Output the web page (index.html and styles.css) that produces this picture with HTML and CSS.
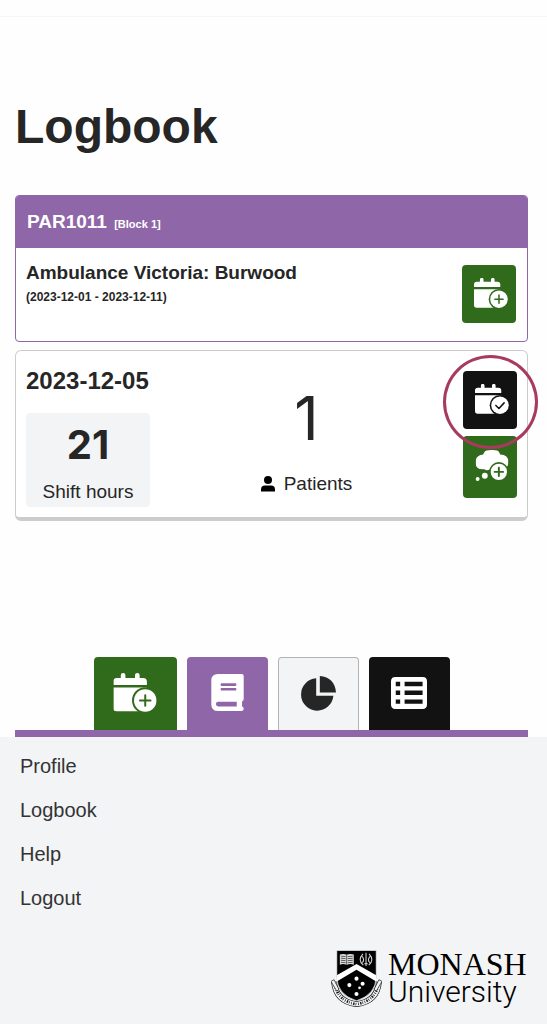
FILE: index.html
```
<!DOCTYPE html>
<html lang="en">
<head>
    <meta charset="UTF-8">
    <meta name="viewport" content="width=device-width, initial-scale=1.0">
    <title>Logbook</title>
    <link rel="stylesheet" href="styles.css">
</head>
<body>
    <!-- Shared icons -->
    <svg class="icon-defs" aria-hidden="true">
        <mask id="badgeCut" maskUnits="userSpaceOnUse" x="0" y="0" width="132" height="118">
            <rect width="132" height="118" fill="#fff"/>
            <circle cx="97" cy="83" r="40" fill="#000"/>
        </mask>
        <symbol id="calendar" viewBox="0 0 132 118">
            <g mask="url(#badgeCut)">
                <path d="M0 36V26q0-11 11-11h12V7q0-7 7-7t7 7v8h29V7q0-7 7-7t7 7v8h11q11 0 11 11v10z"/>
                <path d="M0 44h102v72H10q-10 0-10-10z"/>
            </g>
            <circle cx="97" cy="83" r="34"/>
        </symbol>
        <symbol id="calendar-plus" viewBox="0 0 132 118">
            <use href="#calendar" width="132" height="118"/>
            <path class="icon-mark" d="M97 67v32M81 83h32"/>
        </symbol>
        <symbol id="calendar-check" viewBox="0 0 132 118">
            <use href="#calendar" width="132" height="118"/>
            <path class="icon-mark" d="M81 84l12 12 20-22"/>
        </symbol>
    </svg>

    <div class="topbar"></div>

    <main class="page">
        <h1>Logbook</h1>

        <section class="block-card">
            <h2 class="block-header">PAR1011 <small>[Block 1]</small></h2>
            <div class="block-body">
                <div>
                    <h3>Ambulance Victoria: Burwood</h3>
                    <p class="block-dates">(2023-12-01 - 2023-12-11)</p>
                </div>
                <button type="button" class="btn btn-green" aria-label="Add shift">
                    <svg class="icon"><use href="#calendar-plus"/></svg>
                </button>
            </div>
        </section>

        <section class="shift-card">
            <div class="shift-info">
                <h3>2023-12-05</h3>
                <div class="hours">
                    <strong>21</strong>
                    <span>Shift hours</span>
                </div>
            </div>
            <div class="patients">
                <span class="patient-count">1</span>
                <span class="patient-label">
                    <svg class="icon-user" viewBox="0 0 14 16"><circle cx="7" cy="4" r="4"/><path d="M0 15.500v-2q0-4 4-4h6q4 0 4 4v2z"/></svg>
                    Patients
                </span>
            </div>
            <div class="actions">
                <div class="highlighted">
                    <button type="button" class="btn btn-black" aria-label="Complete shift">
                        <svg class="icon"><use href="#calendar-check"/></svg>
                    </button>
                </div>
                <button type="button" class="btn btn-tall btn-green" aria-label="Add reflection">
                    <svg class="icon" viewBox="0 0 102 98">
                        <mask id="cloudCut" maskUnits="userSpaceOnUse" x="0" y="0" width="102" height="98">
                            <rect width="102" height="98" fill="#fff"/>
                            <circle cx="72" cy="67" r="30" fill="#000"/>
                        </mask>
                        <g mask="url(#cloudCut)">
                            <path d="M24 14Q28 0 42 1Q50-2 60 1Q72 0 76 14Q101 15 102 37Q102 51 88 58L44 60Q34 64 28 59Q2 62 0 38Q0 17 24 14z"/>
                        </g>
                        <circle cx="29" cy="79" r="9"/>
                        <circle cx="7" cy="89" r="6"/>
                        <circle cx="72" cy="67" r="25"/>
                        <path class="icon-mark" d="M72 54v26M59 67h26"/>
                    </svg>
                </button>
            </div>
        </section>

        <nav class="tabs" aria-label="Sections">
            <a href="#" class="tab tab-green" aria-label="Add shift">
                <svg class="icon-large"><use href="#calendar-plus"/></svg>
            </a>
            <a href="#" class="tab tab-purple" aria-label="Logbook">
                <svg class="icon-book" viewBox="0 0 98 112">
                    <path fill-rule="evenodd" d="M20 0H92q6 0 6 6V76q0 5-5 7v15q5 1 5 6 0 8-7 8H20Q0 112 0 92V20Q0 0 20 0zM21 84q-7 0-7 7t7 7H77V84zM31 28q-3 0-3 4t3 4H73q3 0 3-4t-3-4zM31 42q-3 0-3 4t3 4H73q3 0 3-4t-3-4z"/>
                </svg>
            </a>
            <a href="#" class="tab tab-light" aria-label="Statistics">
                <svg class="icon-pie" viewBox="0 0 106 106">
                    <path d="M46 7V60H98A49 49 0 1 1 46 7z"/>
                    <path d="M57 0Q102 4 106 50H57z"/>
                </svg>
            </a>
            <a href="#" class="tab tab-black" aria-label="List">
                <svg class="icon-list" viewBox="0 0 106 94">
                    <path fill-rule="evenodd" d="M13 0H93q13 0 13 13V81q0 13-13 13H13Q0 94 0 81V13Q0 0 13 0zM14 14v13H27V14zM40 14v13H93V14zM14 40v13H27V40zM40 40v13H93V40zM14 66v13H27V66zM40 66v13H93V66z"/>
                </svg>
            </a>
        </nav>
    </main>

    <footer class="footer">
        <ul class="footer-links">
            <li><a href="#">Profile</a></li>
            <li><a href="#">Logbook</a></li>
            <li><a href="#">Help</a></li>
            <li><a href="#">Logout</a></li>
        </ul>
        <div class="logo">
            <svg class="crest" viewBox="0 0 150 168" aria-hidden="true">
                <!-- motto ribbon -->
                <path d="M9 92Q14 150 75 158Q136 150 141 92" fill="none" stroke="#111" stroke-width="17"/>
                <path d="M9 92Q14 150 75 158Q136 150 141 92" fill="none" stroke="#f3f4f6" stroke-width="13"/>
                <path d="M11 97Q18 149 75 158Q132 149 139 97" fill="none" stroke="#111" stroke-width="8" stroke-dasharray="2 4 4 3 2 5"/>
                <path d="M0 91l9-5 14 28-6 6zM150 91l-9-5-14 28 6 6z" fill="#f3f4f6" stroke="#111" stroke-width="2"/>
                <!-- shield -->
                <path d="M17 0H133V78Q132 130 75 148Q18 130 17 78z" fill="#000" stroke="#f3f4f6" stroke-width="2"/>
                <path d="M17 73L75 40L133 73V91L75 57L17 91z" fill="#fff"/>
                <!-- book -->
                <path d="M26 12Q37 8 46 13Q55 8 67 12V42Q55 38 46 43Q37 38 26 42z" fill="#ddd"/>
                <path d="M46 13V43M29 17l14 1M29 23l14 1M29 29l14 1M29 35l14 1M49 18l15-1M49 24l15-1M49 30l15-1M49 36l15-1" stroke="#222" stroke-width="2"/>
                <!-- sword and wreath -->
                <path d="M103 7V46M98 39h10M94 10Q77 28 95 43M112 10Q129 28 111 43M91 17q9 10 1 19M115 17q-9 10-1 19" fill="none" stroke="#ddd" stroke-width="3"/>
                <!-- southern cross -->
                <g fill="#fff">
                    <circle cx="75" cy="83" r="6"/>
                    <circle cx="54" cy="102" r="6"/>
                    <circle cx="93" cy="98" r="6"/>
                    <circle cx="84" cy="110" r="4"/>
                    <circle cx="75" cy="128" r="6"/>
                </g>
            </svg>
            <div class="logo-text">
                <span class="logo-name">MONASH</span>
                <span class="logo-sub">University</span>
            </div>
        </div>
    </footer>
</body>
</html>
```

FILE: styles.css
```
:root {
    --purple: #8f67a8;
    --green: #306b1b;
    --black: #121212;
    --text: #262626;
    --gray-100: #f3f4f6;
    --gray-300: #cccccc;
    --ring: #a83b5d;
}

* {
    box-sizing: border-box;
}

body {
    display: flex;
    flex-direction: column;
    min-height: 100vh;
    margin: 0;
    font-family: 'Liberation Sans', Arial, sans-serif;
    font-size: 20px;
    color: var(--text);
    background-color: #fefefe;
}

h1, h2, h3, p {
    margin: 0;
}

.icon-defs {
    position: absolute;
    width: 0;
    height: 0;
}

.topbar {
    height: 17px;
    border-bottom: 1px solid #f5f5f5;
}

.page {
    padding: 82px 19px 0 15px;
}

h1 {
    margin-bottom: 40px;
    font-size: 48px;
    line-height: 56px;
}

h3 {
    font-size: 19px;
    line-height: 24px;
}

/* Block */
.block-card {
    margin-bottom: 8px;
    border: 1px solid var(--purple);
    border-radius: 4px;
    overflow: hidden;
    background-color: white;
}

.block-header {
    padding: 0 11px;
    font-size: 19px;
    line-height: 52px;
    color: white;
    background-color: var(--purple);
}

.block-header small {
    margin-left: 2px;
    font-size: 11px;
    line-height: 1;
}

.block-body {
    display: flex;
    justify-content: space-between;
    padding: 13px 11px 18px 10px;
}

.block-body .btn {
    margin-top: 4px;
}

.block-dates {
    margin-top: 4px;
    font-size: 12px;
    line-height: 16px;
    font-weight: bold;
}

/* Buttons */
.btn {
    display: flex;
    align-items: center;
    justify-content: center;
    flex-shrink: 0;
    width: 54px;
    height: 58px;
    padding: 0 0 2px 3px;
    border: none;
    border-radius: 4px;
    cursor: pointer;
}

.btn-tall {
    height: 62px;
}

.btn-green {
    color: var(--green);
    background-color: var(--green);
}

.btn-black {
    color: var(--black);
    background-color: var(--black);
}

.icon {
    width: 34px;
    height: 32px;
    fill: white;
}

.icon-mark {
    fill: none;
    stroke: currentColor;
    stroke-width: 6;
    stroke-linecap: round;
    stroke-linejoin: round;
}

/* Shift */
.shift-card {
    display: flex;
    padding: 18px 10px 10px;
    border: 1px solid var(--gray-300);
    border-bottom-width: 4px;
    border-radius: 6px;
    background-color: white;
}

.shift-info h3 {
    margin-bottom: 20px;
    font-size: 24px;
}

.hours {
    display: flex;
    flex-direction: column;
    align-items: center;
    width: 124px;
    padding: 8px 0 3px;
    border-radius: 4px;
    font-size: 19px;
    background-color: var(--gray-100);
}

.hours strong {
    font-family: Inter, 'Liberation Sans', sans-serif;
    font-size: 40px;
    line-height: 48px;
}

.hours span {
    margin-top: 11px;
    line-height: 24px;
}

.patients {
    display: flex;
    flex: 1;
    flex-direction: column;
    align-items: center;
    padding-top: 13px;
}

.patient-count {
    font-family: Inter, 'Liberation Sans', sans-serif;
    font-size: 60px;
    line-height: 72px;
}

.patient-label {
    display: flex;
    align-items: center;
    gap: 9px;
    margin-top: 18px;
    font-size: 19px;
    line-height: 24px;
}

.icon-user {
    width: 14px;
    height: 16px;
    fill: black;
}

.actions {
    display: flex;
    flex-direction: column;
    gap: 7px;
    padding-top: 2px;
}

.highlighted {
    position: relative;
}

/* Ring drawn over the button */
.highlighted::after {
    content: "";
    position: absolute;
    z-index: 1;
    inset: -16px -21px -20px -20px;
    border: 3px solid var(--ring);
    border-radius: 50%;
    pointer-events: none;
}

/* Tabs */
.tabs {
    display: flex;
    justify-content: center;
    gap: 10px;
    margin-top: 136px;
    border-bottom: 7px solid var(--purple);
}

.tab {
    display: flex;
    align-items: center;
    justify-content: center;
    width: 81px;
    height: 73px;
    padding-bottom: 2px;
    border-radius: 4px 4px 0 0;
    fill: white;
}

.tab-green {
    width: 83px;
    color: var(--green);
    background-color: var(--green);
}

.tab-purple {
    background-color: var(--purple);
}

.tab-light {
    border: 1px solid #b3b3b3;
    border-bottom: none;
    fill: var(--text);
    background-color: var(--gray-100);
}

.tab-black {
    background-color: var(--black);
}

.icon-large {
    width: 44px;
    height: 39px;
}

.icon-book {
    width: 33px;
    height: 37px;
}

.icon-pie {
    width: 35px;
    height: 35px;
}

.icon-list {
    width: 36px;
    height: 32px;
}

/* Footer */
.footer {
    flex: 1;
    padding: 7px 19px 16px 20px;
    background-color: var(--gray-100);
}

.footer-links {
    margin: 0;
    padding: 0;
    list-style: none;
    line-height: 44px;
}

.footer-links a {
    color: #333333;
    text-decoration: none;
}

.logo {
    display: flex;
    justify-content: flex-end;
    gap: 6px;
    margin-top: 30px;
    color: black;
}

.crest {
    width: 51px;
    height: 58px;
}

.logo-text {
    display: flex;
    flex-direction: column;
    width: 140px;
}

.logo-name {
    font-family: 'Liberation Serif', 'Times New Roman', serif;
    font-size: 32px;
    line-height: 28px;
}

.logo-sub {
    font-family: Roboto, 'Liberation Sans', sans-serif;
    font-size: 30px;
    font-weight: 300;
    line-height: 28px;
}
```
